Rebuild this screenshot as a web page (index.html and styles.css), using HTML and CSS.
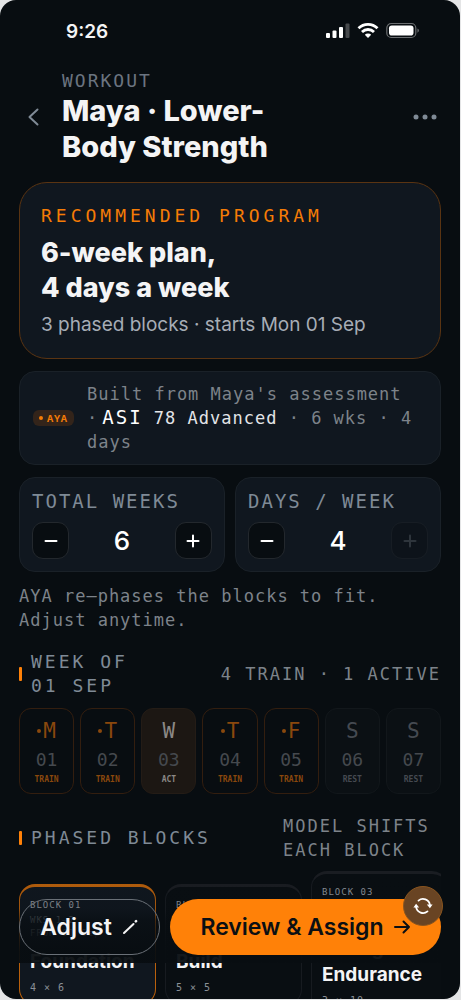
FILE: index.html
```html
<!DOCTYPE html>
<html lang="en">
<head>
<meta charset="utf-8">
<meta name="viewport" content="width=device-width, initial-scale=1">
<title>Workout</title>
<link rel="stylesheet" href="styles.css">
</head>
<body>
<div class="phone">
  <div class="status">
    <span class="time">9:26</span>
    <svg class="status-icons" width="94" height="18" viewBox="0 0 94 18" aria-hidden="true">
      <g fill="#fff">
        <rect x="0" y="11" width="4" height="5" rx="1"/>
        <rect x="6.500" y="8.500" width="4" height="7.500" rx="1"/>
        <rect x="13" y="5" width="4" height="11" rx="1"/>
        <rect x="19.500" y="1.500" width="4" height="14.500" rx="1" opacity=".25"/>
      </g>
      <g fill="none" stroke="#fff" stroke-width="2.800">
        <path d="M32.500 6.200a13.500 13.500 0 0 1 19 0"/>
        <path d="M36 10a8.500 8.500 0 0 1 12 0"/>
      </g>
      <path d="M42 16l-3.200-3.200a4.500 4.500 0 0 1 6.400 0z" fill="#fff"/>
      <rect x="60.800" y="1.500" width="29" height="14" rx="4.500" fill="none" stroke="#fff" stroke-opacity=".4" stroke-width="1.200"/>
      <rect x="63" y="3.500" width="24.500" height="10" rx="2.800" fill="#fff"/>
      <path d="M91.500 6.500c1.800.6 1.800 3.600 0 4.200z" fill="#fff" opacity=".45"/>
    </svg>
  </div>

  <header class="header">
    <button class="icon-btn" aria-label="Back">
      <svg width="30" height="30" viewBox="0 0 30 30"><path d="M18.500 7.500L10.500 15l8 7.500" fill="none" stroke="#7f8a96" stroke-width="2" stroke-linecap="round" stroke-linejoin="round"/></svg>
    </button>
    <div class="heading">
      <p class="eyebrow">WORKOUT</p>
      <h1>Maya · Lower-Body Strength</h1>
    </div>
    <button class="icon-btn" aria-label="More">
      <svg width="30" height="30" viewBox="0 0 30 30" fill="#7f8a96"><circle cx="5" cy="15" r="2.500"/><circle cx="14" cy="15" r="2.500"/><circle cx="23" cy="15" r="2.500"/></svg>
    </button>
  </header>

  <main>
    <section class="card program">
      <p class="program-label">RECOMMENDED PROGRAM</p>
      <h2>6-week plan,<br>4 days a week</h2>
      <p class="program-sub">3 phased blocks · starts Mon 01 Sep</p>
    </section>

    <section class="card source">
      <span class="aya"><i></i>AYA</span>
      <p class="note">Built from Maya's assessment <span class="score">·<b class="asi">ASI</b></span> <b>78 Advanced</b> · 6 wks · 4 days</p>
    </section>

    <div class="steppers">
      <section class="card stepper">
        <h3>TOTAL WEEKS</h3>
        <div class="step-row">
          <button aria-label="Fewer weeks"><svg width="14" height="14" viewBox="0 0 14 14"><path d="M1.500 7h11"/></svg></button>
          <output>6</output>
          <button aria-label="More weeks"><svg width="14" height="14" viewBox="0 0 14 14"><path d="M1.500 7h11M7 1.500v11"/></svg></button>
        </div>
      </section>
      <section class="card stepper">
        <h3>DAYS / WEEK</h3>
        <div class="step-row">
          <button aria-label="Fewer days"><svg width="14" height="14" viewBox="0 0 14 14"><path d="M1.500 7h11"/></svg></button>
          <output>4</output>
          <button aria-label="More days" disabled><svg width="14" height="14" viewBox="0 0 14 14"><path d="M1.500 7h11M7 1.500v11"/></svg></button>
        </div>
      </section>
    </div>
    <p class="note hint">AYA re–phases the blocks to fit. Adjust anytime.</p>

    <div class="section-head week-head">
      <h2>WEEK OF 01 SEP</h2>
      <p>4 TRAIN · 1 ACTIVE</p>
    </div>
    <ol class="days">
      <li class="train"><b>M</b><span>01</span><small>TRAIN</small></li>
      <li class="train"><b>T</b><span>02</span><small>TRAIN</small></li>
      <li class="active"><b>W</b><span>03</span><small>ACT</small></li>
      <li class="train"><b>T</b><span>04</span><small>TRAIN</small></li>
      <li class="train"><b>F</b><span>05</span><small>TRAIN</small></li>
      <li class="rest"><b>S</b><span>06</span><small>REST</small></li>
      <li class="rest"><b>S</b><span>07</span><small>REST</small></li>
    </ol>

    <div class="section-head blocks-head">
      <h2>PHASED BLOCKS</h2>
      <p>MODEL SHIFTS EACH BLOCK</p>
    </div>
    <div class="blocks">
      <article class="block current"><p class="block-no">BLOCK 01</p><p>WKS 1–2</p><p>FROM 01 Sep</p><h3>Foundation</h3><p class="reps">4 × 6</p></article>
      <article class="block"><p class="block-no">BLOCK 02</p><p>WKS 3–4</p><p>FROM 15 Sep</p><h3>Build</h3><p class="reps">5 × 5</p></article>
      <article class="block"><p class="block-no">BLOCK 03</p><p>WKS 5–6</p><p>FROM 29 Sep</p><h3>Strength Endurance</h3><p class="reps">3 × 10</p></article>
    </div>
  </main>

  <div class="actions">
    <button class="adjust">Adjust
      <svg width="18" height="18" viewBox="0 0 18 18" aria-hidden="true"><path d="M3 15L12.500 6" stroke="#f4f4f5" stroke-width="2" stroke-linecap="round"/><path d="M14.800 3.400l.3-.3" stroke="#f4f4f5" stroke-width="2.600" stroke-linecap="round"/></svg>
    </button>
    <button class="assign">Review &amp; Assign
      <svg width="18" height="18" viewBox="0 0 18 18" aria-hidden="true"><path d="M2 9h14M10.500 3.500L16 9l-5.500 5.500" fill="none" stroke="#0b0f13" stroke-width="2" stroke-linecap="round" stroke-linejoin="round"/></svg>
    </button>
    <button class="refresh" aria-label="Refresh">
      <svg width="20" height="20" viewBox="0 0 20 20" aria-hidden="true"><g fill="none" stroke="#fff" stroke-width="1.800" stroke-linecap="round"><path d="M5.500 4.600a7 7 0 0 1 11.400 4.200"/><path d="M14.500 15.400A7 7 0 0 1 3.100 11.200"/></g><path d="M13.800 8.600h5.800l-2.700 3.600zM.4 11.400h5.800L3.100 7.800z" fill="#fff"/></svg>
    </button>
  </div>
</div>
</body>
</html>
```
FILE: styles.css
```css
* { box-sizing: border-box; }
body { margin: 0; padding: 0 1px 1px 0; background: #e4e5e6; font-family: Inter, "Liberation Sans", sans-serif; color: #f4f4f5; }
h1, h2, h3, p, ol { margin: 0; padding: 0; font-weight: 400; }
button { font: inherit; color: inherit; margin: 0; padding: 0; border: 0; background: none; display: flex; align-items: center; justify-content: center; }
svg { display: block; flex: none; }

.phone { position: relative; height: calc(100vh - 1px); overflow: hidden; background: #080d11; border-radius: 16px; }
.eyebrow, .program-label, .note, .stepper h3, .section-head, .days, .block p { font-family: "DejaVu Sans Mono", "Liberation Mono", monospace; }

.status { display: flex; justify-content: space-between; align-items: center; height: 62px; padding: 0 40px 0 66px; }
.time { font-size: 19px; font-weight: 600; }

.header { display: flex; align-items: center; gap: 13px; padding: 7px 19px 17px; }
.heading { flex: 1; }
.eyebrow { font-size: 18px; line-height: 24px; letter-spacing: 2px; color: #6b7480; }
h1 { max-width: 230px; font-size: 29px; line-height: 36px; font-weight: 800; }
.icon-btn { width: 30px; height: 30px; }

main { padding: 0 19px; }
.card { background: #10171f; border: 1px solid #1a2128; border-radius: 16px; }

.program { padding: 20px 21px; border-color: #5a3412; border-radius: 28px; }
.program-label { font-size: 18px; line-height: 26px; letter-spacing: 4px; color: #f57c06; }
.program h2 { margin: 6px 0 7px; font-size: 27px; line-height: 35px; font-weight: 800; }
.program-sub { font-size: 19px; line-height: 26px; color: #a7adb6; }

.source { display: flex; align-items: center; gap: 13px; margin-top: 12px; padding: 10px 13px; }
.aya { display: flex; align-items: center; justify-content: center; gap: 4px; flex: none; width: 41px; height: 16px; border-radius: 6px; background: #33241a; color: #f57c06; font-size: 9px; font-weight: 700; letter-spacing: 1px; }
.aya i { width: 4px; height: 4px; border-radius: 2px; background: #f57c06; }
.note { font-size: 17px; line-height: 24px; letter-spacing: 1px; color: #7d838a; }
.note b { font-weight: 400; color: #e3e5e8; }
.note .score { white-space: nowrap; }
.note .asi { margin-left: 4px; font-size: 19px; line-height: 20px; letter-spacing: 2px; color: #fff; }

.steppers { display: grid; grid-template-columns: 1fr 1fr; gap: 10px; margin-top: 12px; }
.stepper { padding: 11px 12px 12px; }
.stepper h3 { font-size: 19px; line-height: 24px; letter-spacing: 2px; color: #7f8a96; }
.step-row { display: flex; align-items: center; justify-content: space-between; margin-top: 9px; }
.step-row button { width: 37px; height: 37px; border: 1px solid #23282d; border-radius: 11px; background: #080d11; }
.step-row path { fill: none; stroke: #fff; stroke-width: 2; stroke-linecap: round; }
.step-row button:disabled { opacity: .4; background: #0a0f14; }
.step-row button:disabled path { stroke: #5c6268; }
.step-row output { font-size: 26px; line-height: 32px; font-weight: 500; color: #fff; }
.hint { margin-top: 12px; }

.section-head { display: flex; align-items: center; justify-content: space-between; }
.section-head h2 { display: flex; align-items: center; gap: 9px; font-size: 18px; line-height: 24px; letter-spacing: 3px; color: #7f8a96; }
.section-head h2::before { content: ""; flex: none; width: 3px; height: 14px; border-radius: 1px; background: #ff8108; }
.section-head p { font-size: 17px; line-height: 24px; letter-spacing: 2px; color: #7d838a; }
.week-head { margin-top: 18px; }
.week-head h2 { width: 130px; }
.blocks-head { margin-top: 20px; }
.blocks-head p { width: 158px; }

.days { display: grid; grid-template-columns: repeat(7, 1fr); gap: 6px; margin-top: 10px; list-style: none; }
.days li { display: flex; flex-direction: column; align-items: center; height: 86px; padding: 9px 0 0; border: 1px solid #331e0f; border-radius: 12px; }
.days b { display: flex; align-items: center; gap: 2px; font-size: 21px; line-height: 26px; font-weight: 400; }
.days span { margin-top: 4px; font-size: 18px; line-height: 24px; color: #45494e; }
.days small { margin-top: 2px; font-size: 8px; line-height: 12px; font-weight: 700; }
.train { color: #8a480d; }
.train b::before { content: ""; width: 4px; height: 4px; border-radius: 2px; background: #8a480d; }
.days .active { border-color: #241c16; background: #1c1713; color: #8b8885; }
.days .rest { border-color: #12171b; background: #0b1014; color: #454a51; }

.blocks { display: flex; align-items: center; gap: 9px; margin-top: 9px; overflow: hidden; }
.block { flex: none; width: 137px; padding: 10px; border: 1px solid #171b20; border-top: 3px solid #1a1d22; border-radius: 16px; background: #090e12; }
.block p { font-size: 9px; line-height: 13px; letter-spacing: 1px; color: #5f646a; }
.block .block-no { margin: 2px 0; color: #8d939a; }
.block h3 { margin: 9px 0 6px; font-size: 19px; line-height: 26px; font-weight: 700; }
.block .reps { font-size: 10px; color: #8a9096; }
.block.current { border-color: #b9600c; background: #10171f; }

.actions { position: absolute; left: 0; right: 0; bottom: 36px; display: flex; gap: 10px; padding: 30px 19px 8px; background: linear-gradient(rgba(8, 13, 17, 0), rgba(8, 13, 17, .15) 42%, rgba(8, 13, 17, .65) 55%, rgba(8, 13, 17, .8) 70%, rgba(8, 13, 17, .95) 88%); }
.actions button { height: 56px; border-radius: 28px; font-size: 23px; font-weight: 600; }
.actions .adjust { gap: 9px; flex: none; width: 141px; border: 1px solid #6a7077; }
.actions .assign { gap: 9px; flex: 1; background: #ff8108; color: #0b0f13; }
.actions .refresh { position: absolute; right: 17px; top: 17px; width: 40px; height: 40px; border: 1px solid #8a551f; border-radius: 20px; background: #694423; }
```
